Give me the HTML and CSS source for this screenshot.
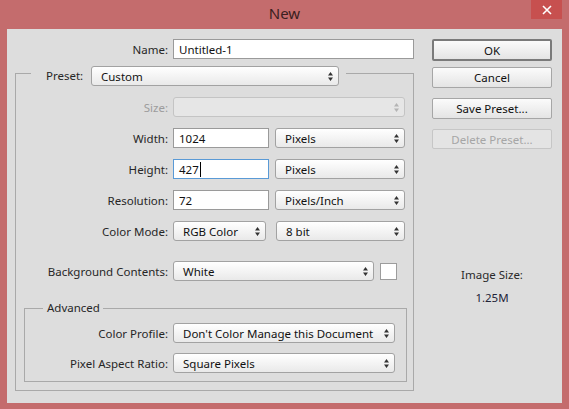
FILE: index.html
```html
<!DOCTYPE html>
<html>
<head>
<meta charset="utf-8">
<link rel="stylesheet" href="styles.css">
</head>
<body>
<div class="window">
  <div class="titlebar">
    <span></span>
    <span class="title">New</span>
    <div class="close"><svg width="10" height="10" viewBox="0 0 10 10"><path d="M1 1L9 9M9 1L1 9" stroke="#fff" stroke-width="1.6" fill="none"/></svg></div>
  </div>
  <div class="client">
    <div class="form">
      <div class="row name-row">
        <span class="lbl lbl-name">Name:</span>
        <div class="input w-name">Untitled-1</div>
      </div>

      <div class="box preset">
        <div class="box-head">
          <span class="seg seg-l"></span>
          <span class="head-label">Preset:</span>
          <div class="select w-preset"><span>Custom</span><svg class="arr" width="5" height="9" viewBox="0 0 5 9"><path d="M0 3.5L2.5 0L5 3.5ZM0 5.5L2.5 9L5 5.5Z" fill="#333"/></svg></div>
          <span class="seg seg-r"></span>
        </div>
        <div class="box-body">
          <div class="row">
            <span class="lbl lbl-main disabled">Size:</span>
            <div class="select select-disabled w-size"><span></span><svg class="arr" width="5" height="9" viewBox="0 0 5 9"><path d="M0 3.5L2.5 0L5 3.5ZM0 5.5L2.5 9L5 5.5Z" fill="#b4b4b4"/></svg></div>
          </div>
          <div class="row">
            <span class="lbl lbl-main">Width:</span>
            <div class="input w-num">1024</div>
            <div class="select w-unit"><span>Pixels</span><svg class="arr" width="5" height="9" viewBox="0 0 5 9"><path d="M0 3.5L2.5 0L5 3.5ZM0 5.5L2.5 9L5 5.5Z" fill="#333"/></svg></div>
          </div>
          <div class="row">
            <span class="lbl lbl-main">Height:</span>
            <div class="input input-focus w-num">427<span class="caret"></span></div>
            <div class="select w-unit"><span>Pixels</span><svg class="arr" width="5" height="9" viewBox="0 0 5 9"><path d="M0 3.5L2.5 0L5 3.5ZM0 5.5L2.5 9L5 5.5Z" fill="#333"/></svg></div>
          </div>
          <div class="row">
            <span class="lbl lbl-main">Resolution:</span>
            <div class="input w-num">72</div>
            <div class="select w-unit"><span>Pixels/Inch</span><svg class="arr" width="5" height="9" viewBox="0 0 5 9"><path d="M0 3.5L2.5 0L5 3.5ZM0 5.5L2.5 9L5 5.5Z" fill="#333"/></svg></div>
          </div>
          <div class="row">
            <span class="lbl lbl-main">Color Mode:</span>
            <div class="select w-mode"><span>RGB Color</span><svg class="arr" width="5" height="9" viewBox="0 0 5 9"><path d="M0 3.5L2.5 0L5 3.5ZM0 5.5L2.5 9L5 5.5Z" fill="#333"/></svg></div>
            <div class="select w-bit"><span>8 bit</span><svg class="arr" width="5" height="9" viewBox="0 0 5 9"><path d="M0 3.5L2.5 0L5 3.5ZM0 5.5L2.5 9L5 5.5Z" fill="#333"/></svg></div>
          </div>
          <div class="row row-bg">
            <span class="lbl lbl-main">Background Contents:</span>
            <div class="select w-bgc"><span>White</span><svg class="arr" width="5" height="9" viewBox="0 0 5 9"><path d="M0 3.5L2.5 0L5 3.5ZM0 5.5L2.5 9L5 5.5Z" fill="#333"/></svg></div>
            <div class="swatch"></div>
          </div>

          <div class="box adv">
            <div class="adv-head">
              <span class="seg aseg-l"></span>
              <span class="adv-title">Advanced</span>
              <span class="seg aseg-r"></span>
            </div>
            <div class="adv-body">
              <div class="row">
                <span class="lbl lbl-adv">Color Profile:</span>
                <div class="select w-adv"><span>Don't Color Manage this Document</span><svg class="arr" width="5" height="9" viewBox="0 0 5 9"><path d="M0 3.5L2.5 0L5 3.5ZM0 5.5L2.5 9L5 5.5Z" fill="#333"/></svg></div>
              </div>
              <div class="row row-par">
                <span class="lbl lbl-adv">Pixel Aspect Ratio:</span>
                <div class="select w-adv"><span>Square Pixels</span><svg class="arr" width="5" height="9" viewBox="0 0 5 9"><path d="M0 3.5L2.5 0L5 3.5ZM0 5.5L2.5 9L5 5.5Z" fill="#333"/></svg></div>
              </div>
            </div>
          </div>
        </div>
      </div>
    </div>

    <div class="side">
      <div class="btn btn-default btn-ok">OK</div>
      <div class="btn btn-cancel">Cancel</div>
      <div class="btn btn-save">Save Preset...</div>
      <div class="btn btn-disabled btn-delete">Delete Preset...</div>
      <div class="info">
        <div class="info-label">Image Size:</div>
        <div class="info-value">1.25M</div>
      </div>
    </div>
  </div>
</div>
</body>
</html>
```

FILE: styles.css
```css
* { box-sizing: border-box; }

html, body {
  margin: 0;
  padding: 0;
}

body {
  width: 569px;
  height: 409px;
  background: #c46c6d;
  font-family: "Noto Sans", "Open Sans", sans-serif;
  font-size: 11.5px;
  color: #262626;
  overflow: hidden;
}

.window {
  width: 569px;
  height: 409px;
  display: flex;
  flex-direction: column;
}

.titlebar {
  height: 29px;
  display: grid;
  grid-template-columns: 1fr auto 1fr;
  align-items: start;
}

.title {
  font-size: 15px;
  line-height: 26px;
  color: #3a2020;
}

.close {
  justify-self: end;
  margin-right: 7px;
  width: 31px;
  height: 19px;
  background: #c7504f;
  display: flex;
  align-items: center;
  justify-content: center;
}

.client {
  margin: 0 7px 0 7px;
  height: 374px;
  background: #dddddd;
  display: flex;
  padding-top: 10px;
}

.form {
  width: 407px;
  display: flex;
  flex-direction: column;
}

.row {
  display: flex;
  align-items: center;
  height: 20px;
  margin-bottom: 11px;
}

.lbl {
  text-align: right;
  margin-right: 5px;
  white-space: nowrap;
  color: #262626;
}

.lbl.disabled { color: #9c9c9c; }

.lbl-name { width: 161px; }
.lbl-main { width: 152px; }
.lbl-adv { width: 143px; }

.name-row { margin-bottom: 7px; }

.input {
  height: 20px;
  background: #fff;
  border: 1px solid #9a9a9a;
  padding-left: 5px;
  display: flex;
  align-items: center;
  color: #111;
}

.input-focus { border-color: #5a9ad6; }

.caret {
  display: inline-block;
  width: 1px;
  height: 15px;
  background: #000;
  margin-left: 1px;
}

.w-name { width: 241px; }
.w-num { width: 96px; margin-right: 6px; }

.select {
  height: 20px;
  border: 1px solid #a2a2a2;
  border-radius: 3px;
  background: linear-gradient(#ffffff, #e9e9e9);
  display: flex;
  align-items: center;
  justify-content: space-between;
  padding: 0 5px 0 9px;
  color: #111;
  white-space: nowrap;
}

.select-disabled {
  background: #e6e6e6;
  border-color: #c4c4c4;
}

.w-preset { width: 248px; }
.w-size { width: 232px; }
.w-unit { width: 130px; }
.w-mode { width: 93px; margin-right: 10px; }
.w-bit { width: 129px; }
.w-bgc { width: 201px; margin-right: 6px; }
.w-adv { width: 222px; }

.swatch {
  width: 17px;
  height: 17px;
  background: #fff;
  border: 1px solid #9c9c9c;
}

.row-bg {
  margin-top: 20px;
  margin-bottom: 19px;
}

/* group boxes */
.box { display: flex; flex-direction: column; }

.preset {
  width: 399px;
  margin-left: 8px;
}

.seg {
  border-top: 1px solid #a9a9a9;
}

.box-head {
  display: flex;
  height: 20px;
  align-items: flex-start;
}

.seg-l {
  width: 16px;
  height: 13px;
  margin-top: 7px;
  border-left: 1px solid #a9a9a9;
}

.head-label {
  width: 45px;
  margin-left: 15px;
  line-height: 20px;
  color: #262626;
}

.seg-r {
  flex: 1;
  height: 13px;
  margin-top: 7px;
  margin-left: 7px;
  border-right: 1px solid #a9a9a9;
}

.box-body {
  border: 1px solid #a9a9a9;
  border-top: none;
  padding-top: 11px;
  padding-bottom: 8px;
}

.adv {
  margin-left: 8px;
  margin-right: 6px;
}

.adv-head {
  display: flex;
  height: 16px;
  align-items: flex-start;
}

.aseg-l {
  width: 19px;
  height: 8px;
  margin-top: 8px;
  border-left: 1px solid #a9a9a9;
}

.adv-title {
  margin-left: 4px;
  line-height: 16px;
  color: #262626;
}

.aseg-r {
  flex: 1;
  height: 8px;
  margin-top: 8px;
  margin-left: 3px;
  border-right: 1px solid #a9a9a9;
}

.adv-body {
  border: 1px solid #a9a9a9;
  border-top: none;
  padding-top: 7px;
  padding-bottom: 8px;
}

.adv-body .row { margin-bottom: 10px; }
.adv-body .row-par { margin-bottom: 0; }

/* right side */
.side {
  margin-left: 18px;
  width: 120px;
  display: flex;
  flex-direction: column;
}

.btn {
  height: 21px;
  border: 1px solid #a6a6a6;
  border-radius: 2px;
  background: linear-gradient(#fbfbfb, #e4e4e4);
  display: flex;
  align-items: center;
  justify-content: center;
  color: #111;
}

.btn-default {
  border: 2px solid #7a7a7a;
  height: 22px;
}

.btn-cancel { margin-top: 6px; }
.btn-save { margin-top: 10px; }
.btn-delete { margin-top: 10px; height: 20px; }

.btn-disabled {
  color: #a6a6a6;
  border-color: #c6c6c6;
  background: #e4e4e4;
}

.info {
  margin-top: 118px;
  text-align: center;
}

.info-label {
  line-height: 16px;
  color: #2a2a2a;
}

.info-value {
  margin-top: 7px;
  line-height: 16px;
  color: #232338;
}
```
